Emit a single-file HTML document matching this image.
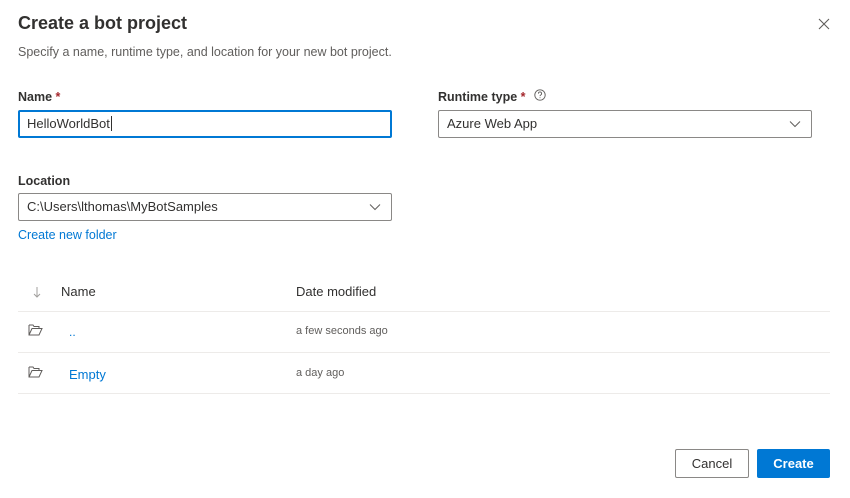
<!DOCTYPE html>
<html><head><style>
body{margin:0;width:850px;height:498px;background:#fff;font-family:"Liberation Sans",sans-serif;color:#323130;position:relative;overflow:hidden}
.a{position:absolute}
.lbl{font-size:12.5px;font-weight:bold;color:#323130}
.req{color:#a4262c}
.inp{position:absolute;box-sizing:border-box;height:28px;border:1px solid #8a8886;border-radius:2px;font-size:13px;line-height:26px;padding-left:8px;color:#323130}
.chev{position:absolute;right:10px;top:9px}
.line{position:absolute;left:18px;width:812px;height:1px;background:#edebe9}
.btn{position:absolute;box-sizing:border-box;height:29px;top:449px;border-radius:2px;font-size:13px;font-weight:bold;text-align:center;line-height:27px}
</style></head><body>
<div class="a" style="left:18px;top:13px;font-size:18px;font-weight:bold;color:#323130">Create a bot project</div>
<svg class="a" style="left:818px;top:18px" width="12" height="12" viewBox="0 0 12 12"><path d="M1 1L11 11M11 1L1 11" stroke="#605e5c" stroke-width="1.1"/></svg>
<div class="a" style="left:18px;top:45px;font-size:12.5px;color:#605e5c">Specify a name, runtime type, and location for your new bot project.</div>
<div class="a lbl" style="left:18px;top:90px">Name <span class="req">*</span></div>
<div class="inp" style="left:18px;top:110px;width:374px;border:2px solid #0078d4;line-height:24px;padding-left:7px">HelloWorldBot<span style="border-left:1px solid #323130;margin-left:1px"></span></div>
<div class="a lbl" style="left:438px;top:90px">Runtime type <span class="req">*</span></div>
<svg class="a" style="left:534px;top:89px" width="12" height="12" viewBox="0 0 12 12"><circle cx="6" cy="6" r="5.2" fill="none" stroke="#605e5c" stroke-width="0.9"/><path d="M4.4 4.6a1.6 1.6 0 1 1 2.3 1.4c-.5.3-.7.6-.7 1.1" fill="none" stroke="#605e5c" stroke-width="0.9"/><circle cx="6" cy="8.8" r=".5" fill="#605e5c"/></svg>
<div class="inp" style="left:438px;top:110px;width:374px">Azure Web App<svg class="chev" width="12" height="8" viewBox="0 0 12 8"><path d="M1 1.5L6 6.5L11 1.5" fill="none" stroke="#605e5c"/></svg></div>
<div class="a lbl" style="left:18px;top:174px">Location</div>
<div class="inp" style="left:18px;top:193px;width:374px">C:\Users\lthomas\MyBotSamples<svg class="chev" width="12" height="8" viewBox="0 0 12 8"><path d="M1 1.5L6 6.5L11 1.5" fill="none" stroke="#605e5c"/></svg></div>
<div class="a" style="left:18px;top:228px;font-size:12.5px;color:#0078d4">Create new folder</div>
<svg class="a" style="left:33px;top:286px" width="8" height="12" viewBox="0 0 8 12"><path d="M4 1V11M1 8L4 11L7 8" fill="none" stroke="#a19f9d"/></svg>
<div class="a" style="left:61px;top:284px;font-size:13px">Name</div>
<div class="a" style="left:296px;top:284px;font-size:13px">Date modified</div>
<div class="line" style="top:311px"></div>
<svg class="a" style="left:28px;top:324px" width="15" height="12" viewBox="0 0 15 12"><path d="M1 1H5L6 2.5H11V4.5M1 1V11H11L14 4.5H4L1 11" fill="none" stroke="#605e5c"/></svg>
<div class="a" style="left:69px;top:325px;font-size:12px;color:#0078d4">..</div>
<div class="a" style="left:296px;top:325px;font-size:11px;color:#605e5c">a few seconds ago</div>
<div class="line" style="top:352px"></div>
<svg class="a" style="left:28px;top:366px" width="15" height="12" viewBox="0 0 15 12"><path d="M1 1H5L6 2.5H11V4.5M1 1V11H11L14 4.5H4L1 11" fill="none" stroke="#605e5c"/></svg>
<div class="a" style="left:69px;top:367px;font-size:13px;color:#0078d4">Empty</div>
<div class="a" style="left:296px;top:367px;font-size:11px;color:#605e5c">a day ago</div>
<div class="line" style="top:393px"></div>
<div class="btn" style="left:675px;width:74px;border:1px solid #8a8886;color:#323130;font-weight:normal">Cancel</div>
<div class="btn" style="left:757px;width:73px;background:#0078d4;color:#fff;line-height:29px">Create</div>
</body></html>
